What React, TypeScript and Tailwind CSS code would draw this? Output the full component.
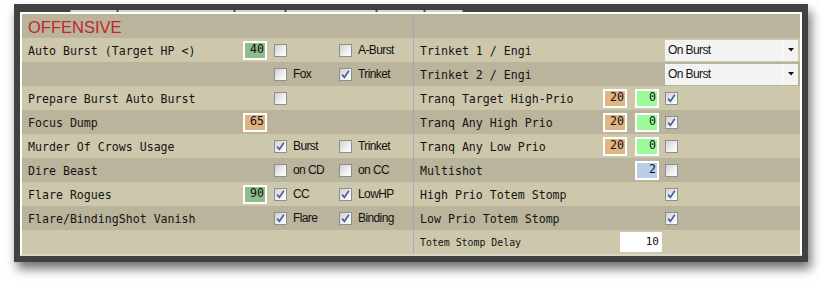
import React from "react";

const mono = "font-['DejaVu_Sans_Mono',monospace]";
const sans = "font-['Liberation_Sans',Arial,sans-serif]";

function Cb({ on }: { on?: boolean }) {
  return (
    <span className="relative flex w-[13px] h-[13px] shrink-0 border border-[#8e8f8f] bg-gradient-to-br from-[#cfcfcf] via-[#ececec] to-white">
      {on && (
        <svg width="11" height="11" viewBox="0 0 11 11" className="absolute left-0 top-0">
          <path d="M2.2 5.6 L4.4 8.4 L8.8 1.8" stroke="#4a5aa0" strokeWidth="1.7" fill="none" />
        </svg>
      )}
    </span>
  );
}

function Num({ v, bg }: { v: string; bg: string }) {
  return (
    <span className={`w-[24px] h-[19px] ${bg} border-2 border-white flex items-center justify-end pr-[1px] text-[11.6px] text-[#111] ${mono}`}>
      {v}
    </span>
  );
}

function CbLabel({ on, text }: { on?: boolean; text?: string }) {
  return (
    <div className="flex items-center gap-[6px]">
      <Cb on={on} />
      {text && <span className={`${sans} text-[12px] tracking-[-0.6px] text-[#111]`}>{text}</span>}
    </div>
  );
}

type LeftRow = {
  label?: string;
  num?: { v: string; bg: string };
  a?: { on?: boolean; text?: string };
  b?: { on?: boolean; text?: string };
};

const leftRows: LeftRow[] = [
  { label: "Auto Burst (Target HP <)", num: { v: "40", bg: "bg-[#8ebd88]" }, a: {}, b: { text: "A-Burst" } },
  { a: { text: "Fox" }, b: { on: true, text: "Trinket" } },
  { label: "Prepare Burst Auto Burst", a: {} },
  { label: "Focus Dump", num: { v: "65", bg: "bg-[#ddb383]" } },
  { label: "Murder Of Crows Usage", a: { on: true, text: "Burst" }, b: { text: "Trinket" } },
  { label: "Dire Beast", a: { text: "on CD" }, b: { text: "on CC" } },
  { label: "Flare Rogues", num: { v: "90", bg: "bg-[#8ebd88]" }, a: { on: true, text: "CC" }, b: { on: true, text: "LowHP" } },
  { label: "Flare/BindingShot Vanish", a: { on: true, text: "Flare" }, b: { on: true, text: "Binding" } },
  {},
];

const rowBg = (i: number) => (i % 2 === 0 ? "bg-[#cdc8ab]" : "bg-[#b9b49b]");

function Select() {
  return (
    <div className="w-[133px] h-[21px] bg-[#f3f3f3] flex">
      <span className={`flex-1 pl-[3px] flex items-center ${sans} text-[12px] tracking-[-0.6px] text-[#111]`}>On Burst</span>
      <span className="w-px bg-white" />
      <span className="w-[15px] flex items-center justify-center">
        <svg width="6" height="4" viewBox="0 0 6 4">
          <path d="M0 0 H6 L3 3.5 Z" fill="#111" />
        </svg>
      </span>
    </div>
  );
}

const label = `pt-[4px] text-[11.6px] text-[#141414] ${mono} whitespace-nowrap`;

export default function App() {
  const tabs = [47, 116, 50, 90, 47, 38];
  return (
    <div className="w-[823px] h-[286px] bg-white pt-[4px] pl-[14px]">
      <div className="w-[794px] h-[258px] bg-[#414141] px-[6px] pt-[6px] shadow-[3px_7px_10px_rgba(0,0,0,0.55)]">
        <div className="flex h-[2px] pl-[50px] gap-[1px]">
          {tabs.map((w, i) => (
            <span key={i} style={{ width: w }} className="h-[2px] bg-[#d2d2d2] border-x border-[#9a9a9a]" />
          ))}
        </div>
        <div className="border-2 border-white border-b-[#d9d6c6] flex">
          <div className="w-[392px] border-r border-[#a7a7b9]">
            <div className="h-[24px] bg-[#b9b49b] flex items-center pl-[6px] pt-[2px]">
              <span className={`${sans} text-[16.5px] text-[#c2262c]`}>OFFENSIVE</span>
            </div>
            {leftRows.map((r, i) => (
              <div key={i} className={`h-[24px] flex items-center ${rowBg(i)}`}>
                <div className={`w-[221px] pl-[6px] ${label}`}>{r.label}</div>
                <div className="w-[24px]">{r.num && <Num v={r.num.v} bg={r.num.bg} />}</div>
                <div className="w-[7px]" />
                <div className="w-[65px]">{r.a && <CbLabel on={r.a.on} text={r.a.text} />}</div>
                <div>{r.b && <CbLabel on={r.b.on} text={r.b.text} />}</div>
              </div>
            ))}
          </div>
          <div className="flex-1">
            <div className="h-[24px] bg-[#b9b49b]" />
            {["Trinket 1 / Engi", "Trinket 2 / Engi"].map((t, i) => (
              <div key={t} className={`h-[24px] flex items-center ${rowBg(i)}`}>
                <div className={`w-[251px] pl-[6px] ${label}`}>{t}</div>
                <Select />
              </div>
            ))}
            {[
              { t: "Tranq Target High-Prio", on: true },
              { t: "Tranq Any High Prio", on: true },
              { t: "Tranq Any Low Prio", on: false },
            ].map((r, i) => (
              <div key={r.t} className={`h-[24px] flex items-center ${rowBg(i + 2)}`}>
                <div className={`w-[189px] pl-[6px] ${label}`}>{r.t}</div>
                <Num v="20" bg="bg-[#e0b483]" />
                <div className="w-[8px]" />
                <Num v="0" bg="bg-[#9bfb98]" />
                <div className="w-[6px]" />
                <Cb on={r.on} />
              </div>
            ))}
            <div className={`h-[24px] flex items-center ${rowBg(5)}`}>
              <div className={`w-[221px] pl-[6px] ${label}`}>Multishot</div>
              <Num v="2" bg="bg-[#b8cfea]" />
              <div className="w-[6px]" />
              <Cb />
            </div>
            {["High Prio Totem Stomp", "Low Prio Totem Stomp"].map((t, i) => (
              <div key={t} className={`h-[24px] flex items-center ${rowBg(i + 6)}`}>
                <div className={`w-[251px] pl-[6px] ${label}`}>{t}</div>
                <Cb on />
              </div>
            ))}
            <div className={`h-[24px] flex items-center ${rowBg(8)}`}>
              <div className={`w-[206px] pl-[6px] pt-[2px] text-[9.9px] text-[#141414] ${mono}`}>Totem Stomp Delay</div>
              <span className={`w-[42px] h-[20px] bg-white flex items-center justify-end pr-[3px] text-[11px] text-[#111] ${mono}`}>10</span>
            </div>
          </div>
        </div>
      </div>
    </div>
  );
}
